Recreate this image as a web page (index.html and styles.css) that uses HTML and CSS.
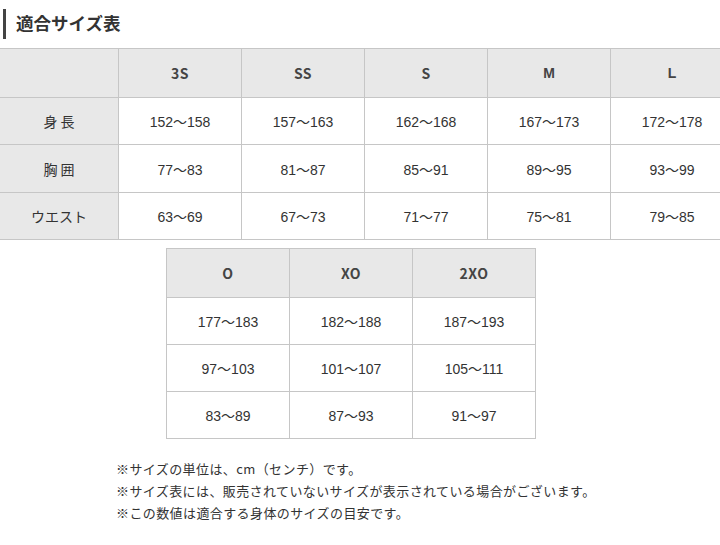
FILE: index.html
```html
<!DOCTYPE html>
<html lang="ja">
<head>
<meta charset="utf-8">
<link rel="stylesheet" href="styles.css">
</head>
<body>
<div class="page">
  <h2 class="title">適合サイズ表</h2>
  <div class="wide">
    <table class="size size-main">
      <colgroup>
        <col class="c-label"><col class="c"><col class="c"><col class="c"><col class="c"><col class="c">
      </colgroup>
      <tr class="head"><th></th><th class="sym">3S</th><th class="sym">SS</th><th class="sym">S</th><th>M</th><th>L</th></tr>
      <tr><th>身 長</th><td>152～158</td><td>157～163</td><td>162～168</td><td>167～173</td><td>172～178</td></tr>
      <tr><th>胸 囲</th><td>77～83</td><td>81～87</td><td>85～91</td><td>89～95</td><td>93～99</td></tr>
      <tr><th>ウエスト</th><td>63～69</td><td>67～73</td><td>71～77</td><td>75～81</td><td>79～85</td></tr>
    </table>
  </div>
  <table class="size size-sub">
    <colgroup><col class="c"><col class="c"><col class="c"></colgroup>
    <tr class="head"><th class="sym">O</th><th class="sym">XO</th><th class="sym">2XO</th></tr>
    <tr><td>177～183</td><td>182～188</td><td>187～193</td></tr>
    <tr><td>97～103</td><td>101～107</td><td>105～111</td></tr>
    <tr><td>83～89</td><td>87～93</td><td>91～97</td></tr>
  </table>
  <ul class="notes">
    <li>※サイズの単位は、cm（センチ）です。</li>
    <li>※サイズ表には、販売されていないサイズが表示されている場合がございます。</li>
    <li>※この数値は適合する身体のサイズの目安です。</li>
  </ul>
</div>
</body>
</html>
```

FILE: styles.css
```css
html, body {
  margin: 0;
  padding: 0;
  background: #fff;
  overflow: hidden;
}
body {
  font-family: "Liberation Sans", "Noto Sans CJK JP", sans-serif;
  color: #333;
  width: 720px;
  height: 545px;
}
.page {
  padding-top: 9px;
}
.title {
  margin: 0 0 0 3px;
  padding: 0 0 0 10px;
  border-left: 3px solid #444;
  height: 30px;
  line-height: 27px;
  font-size: 17.5px;
  font-weight: bold;
  color: #333;
  font-family: "Noto Sans CJK JP", sans-serif;
}
.wide {
  margin-top: 9px;
  width: 720px;
  overflow: hidden;
}
.size {
  border-collapse: collapse;
  table-layout: fixed;
  font-size: 14px;
}
.size th, .size td {
  border: 1px solid #c6c6c6;
  text-align: center;
  padding: 0;
  color: #333;
}
.size th {
  background: #e8e8e8;
  font-weight: normal;
  font-family: "Noto Sans CJK JP", sans-serif;
  font-size: 14px;
}
.size .head th {
  font-weight: bold;
  font-family: "Liberation Sans", sans-serif;
  color: #444;
  font-size: 14px;
}
.size .head th.sym {
  font-family: "Noto Sans CJK JP", sans-serif;
  font-weight: bold;
  letter-spacing: 0.5px;
}
.size tr { height: 47px; }
.size tr.head { height: 49px; }
.size-main {
  width: 733px;
  margin-left: -1px;
}
.c-label { width: 119px; }
.c { width: 123px; }
.size-main tr:nth-child(3) { height: 48px; }
.size-sub {
  width: 370px;
  margin: 8px 0 0 166px;
}
.notes {
  list-style: none;
  margin: 19px 0 0 116px;
  padding: 0;
  font-size: 13px;
  letter-spacing: 0.4px;
  line-height: 22px;
  color: #333;
  font-family: "Noto Sans CJK JP", sans-serif;
}
.notes li { margin: 0; }
```
